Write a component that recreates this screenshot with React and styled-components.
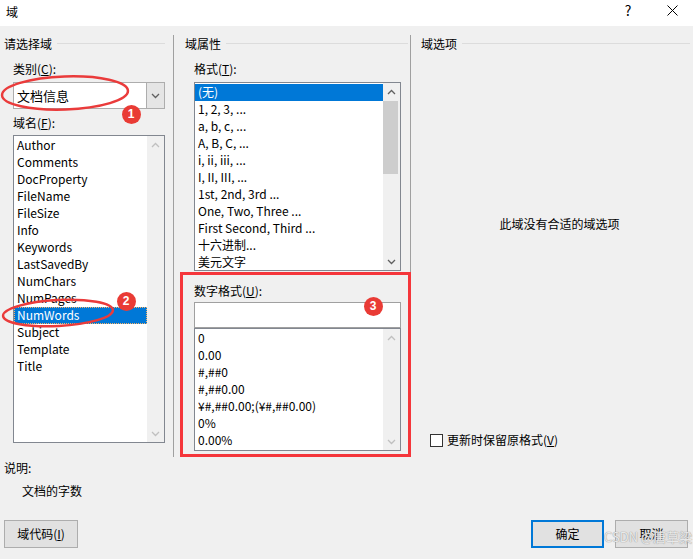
import React from 'react';
import styled, { createGlobalStyle } from 'styled-components';

const Global = createGlobalStyle`
  html, body { margin: 0; padding: 0; background: #f0f0f0; }
  body {
    font-family: "Noto Sans CJK SC", "Noto Sans", sans-serif;
    font-size: 12px;
    color: #000;
  }
  * { box-sizing: border-box; }
`;

const Window = styled.div`
  position: relative;
  width: 693px;
  height: 559px;
  background: #f0f0f0;
  overflow: hidden;
  display: flex;
  flex-direction: column;
`;

const TitleBar = styled.div`
  height: 26px;
  flex-shrink: 0;
  background: #fff;
  display: flex;
  align-items: center;
`;

const Title = styled.span`
  flex: 1;
  padding-left: 6px;
  line-height: 16px;
  margin-top: -3px;
`;

const TitleButton = styled.div`
  width: ${p => p.$w}px;
  height: 26px;
  display: flex;
  align-items: center;
  justify-content: center;
  padding-bottom: 6px;
  font-size: 14px;
`;

const Main = styled.div`
  display: flex;
  height: 431px;
  padding-top: 9px;
  flex-shrink: 0;
`;

const Column = styled.div`
  width: ${p => (p.$w ? `${p.$w}px` : 'auto')};
  flex: ${p => (p.$w ? '0 0 auto' : '1')};
  display: flex;
  flex-direction: column;
`;

const VSep = styled.div`
  width: 1px;
  background: #a0a0a0;
  flex-shrink: 0;
`;

const GroupHeading = styled.div`
  display: flex;
  align-items: center;
  height: 18px;
  padding-left: ${p => p.$pl}px;
  padding-right: ${p => p.$pr}px;
  line-height: 18px;
  white-space: nowrap;
`;

const HeadingLine = styled.div`
  flex: 1;
  height: 1px;
  margin-left: 5px;
  margin-top: -1px;
  background: #dcdcdc;
`;

const Content = styled.div`
  display: flex;
  flex-direction: column;
  padding-left: ${p => p.$pl}px;
  padding-right: ${p => p.$pr}px;
  flex: 1;
`;

const FieldLabel = styled.div`
  line-height: 16px;
  height: 16px;
  margin-top: ${p => p.$mt}px;
  white-space: nowrap;
`;

const Combo = styled.div`
  margin-top: 5px;
  height: 27px;
  display: flex;
  border: 1px solid #adadad;
  background: #fff;
`;

const ComboText = styled.div`
  flex: 1;
  padding-left: 3px;
  line-height: 25px;
  font-size: 13px;
`;

const DropButton = styled.div`
  width: 18px;
  border-left: 1px solid #adadad;
  background: #e5e5e5;
  display: flex;
  align-items: center;
  justify-content: center;
`;

const ListBox = styled.div`
  margin-top: ${p => p.$mt}px;
  height: ${p => p.$h}px;
  border: 1px solid #828790;
  background: #fff;
  display: flex;
  overflow: hidden;
  flex-shrink: 0;
`;

const Items = styled.div`
  flex: 1;
  padding-top: ${p => p.$pt}px;
  overflow: hidden;
`;

const Item = styled.div`
  height: 17px;
  line-height: 16px;
  padding-left: 3px;
  white-space: nowrap;
  background: ${p => (p.$selected ? '#0078d7' : 'transparent')};
  color: ${p => (p.$selected ? '#fff' : '#000')};
  outline: ${p => (p.$focus ? '1px dotted #f7b267' : 'none')};
  outline-offset: -1px;
`;

const Scrollbar = styled.div`
  width: 17px;
  flex-shrink: 0;
  background: #f0f0f0;
  display: flex;
  flex-direction: column;
`;

const ArrowBox = styled.div`
  height: 17px;
  display: flex;
  align-items: center;
  justify-content: center;
  flex-shrink: 0;
`;

const Track = styled.div`
  flex: 1;
  position: relative;
`;

const Thumb = styled.div`
  position: absolute;
  left: 0;
  right: 2px;
  top: ${p => p.$top}px;
  height: ${p => p.$h}px;
  background: #cdcdcd;
`;

const TextInput = styled.div`
  margin-top: 3px;
  height: 26px;
  border: 1px solid #a0a0a0;
  background: #fff;
  flex-shrink: 0;
`;

const Message = styled.div`
  margin-top: 163px;
  line-height: 16px;
  text-align: center;
`;

const Spacer = styled.div`
  flex: 1;
`;

const CheckRow = styled.label`
  display: flex;
  align-items: center;
  gap: 4px;
  height: 16px;
  margin-bottom: 9px;
  line-height: 16px;
`;

const CheckBox = styled.span`
  width: 13px;
  height: 13px;
  border: 1px solid #333;
  background: #fff;
  display: inline-block;
`;

const Footer = styled.div`
  display: flex;
  flex-direction: column;
  padding: 0 5px 0 4px;
`;

const DescLabel = styled.div`
  margin-top: 3px;
  line-height: 16px;
`;

const DescText = styled.div`
  margin-top: 7px;
  padding-left: 18px;
  line-height: 16px;
`;

const ButtonRow = styled.div`
  margin-top: 21px;
  display: flex;
  justify-content: space-between;
`;

const ButtonGroup = styled.div`
  display: flex;
  gap: 11px;
`;

const Button = styled.div`
  width: ${p => p.$w}px;
  height: 28px;
  background: #e1e1e1;
  border: ${p => (p.$primary ? '2px solid #0078d7' : '1px solid #adadad')};
  display: flex;
  align-items: center;
  justify-content: center;
  line-height: 16px;
`;

const Overlay = styled.svg`
  position: absolute;
  left: 0;
  top: 0;
  width: 693px;
  height: 559px;
  pointer-events: none;
`;

const RedFrame = styled.div`
  position: absolute;
  left: 180px;
  top: 272px;
  width: 231px;
  height: 185px;
  border: 3px solid #f5363b;
  pointer-events: none;
`;

const Badge = styled.div`
  position: absolute;
  left: ${p => p.$x - 9.5}px;
  top: ${p => p.$y - 9.5}px;
  width: 19px;
  height: 19px;
  border-radius: 50%;
  background: #e93b35;
  color: #fff;
  font-family: "Liberation Sans", Arial, sans-serif;
  font-weight: bold;
  font-size: 12px;
  display: flex;
  align-items: center;
  justify-content: center;
`;

const Watermark = styled.div`
  position: absolute;
  left: 604px;
  top: 528px;
  font-size: 13px;
  line-height: 18px;
  color: rgba(255, 255, 255, 0.8);
  text-shadow: 0 0 1px #9a9a9a, 0 0 1px #9a9a9a;
  pointer-events: none;
  white-space: nowrap;
`;

const Chevron = ({ up, enabled }) => (
  <svg width="9" height="6" viewBox="0 0 9 6">
    <polyline
      points={up ? '1,5 4.5,1.5 8,5' : '1,1 4.5,4.5 8,1'}
      fill="none"
      stroke={enabled ? '#606060' : '#c0c0c0'}
      strokeWidth="1.3"
    />
  </svg>
);

const VScroll = ({ enabled, thumb }) => (
  <Scrollbar>
    <ArrowBox><Chevron up enabled={enabled} /></ArrowBox>
    <Track>{thumb && <Thumb $top={thumb.top} $h={thumb.h} />}</Track>
    <ArrowBox><Chevron enabled={enabled} /></ArrowBox>
  </Scrollbar>
);

const fieldNames = [
  'Author', 'Comments', 'DocProperty', 'FileName', 'FileSize', 'Info',
  'Keywords', 'LastSavedBy', 'NumChars', 'NumPages', 'NumWords',
  'Subject', 'Template', 'Title',
];

const formats = [
  '(无)', '1, 2, 3, ...', 'a, b, c, ...', 'A, B, C, ...', 'i, ii, iii, ...',
  'I, II, III, ...', '1st, 2nd, 3rd ...', 'One, Two, Three ...',
  'First Second, Third ...', '十六进制...', '美元文字',
];

const numberFormats = [
  '0', '0.00', '#,##0', '#,##0.00', '¥#,##0.00;(¥#,##0.00)', '0%', '0.00%',
];

export default function App() {
  return (
    <>
      <Global />
      <Window>
        <TitleBar>
          <Title>域</Title>
          <TitleButton $w={46}>?</TitleButton>
          <TitleButton $w={42}>
            <svg width="11" height="11" viewBox="0 0 11 11">
              <path d="M0.5 0.5 L10.5 10.5 M10.5 0.5 L0.5 10.5" stroke="#000" strokeWidth="1" />
            </svg>
          </TitleButton>
        </TitleBar>

        <Main>
          <Column $w={173}>
            <GroupHeading $pl={4} $pr={8}>
              请选择域<HeadingLine />
            </GroupHeading>
            <Content $pl={13} $pr={8}>
              <FieldLabel $mt={8}>类别(<u>C</u>):</FieldLabel>
              <Combo>
                <ComboText>文档信息</ComboText>
                <DropButton><Chevron enabled /></DropButton>
              </Combo>
              <FieldLabel $mt={6}>域名(<u>F</u>):</FieldLabel>
              <ListBox $mt={4} $h={308}>
                <Items $pt={1}>
                  {fieldNames.map(n => (
                    <Item key={n} $selected={n === 'NumWords'} $focus={n === 'NumWords'}>{n}</Item>
                  ))}
                </Items>
                <VScroll />
              </ListBox>
            </Content>
          </Column>

          <VSep />

          <Column $w={236}>
            <GroupHeading $pl={11} $pr={2}>
              域属性<HeadingLine />
            </GroupHeading>
            <Content $pl={20} $pr={9}>
              <FieldLabel $mt={8}>格式(<u>T</u>):</FieldLabel>
              <ListBox $mt={5} $h={189}>
                <Items $pt={1}>
                  {formats.map((f, i) => (
                    <Item key={f} $selected={i === 0}>{f}</Item>
                  ))}
                </Items>
                <VScroll enabled thumb={{ top: 1, h: 73 }} />
              </ListBox>
              <FieldLabel $mt={12}>数字格式(<u>U</u>):</FieldLabel>
              <TextInput />
              <ListBox $mt={0} $h={123}>
                <Items $pt={1}>
                  {numberFormats.map(f => (
                    <Item key={f}>{f}</Item>
                  ))}
                </Items>
                <VScroll />
              </ListBox>
            </Content>
          </Column>

          <VSep />

          <Column>
            <GroupHeading $pl={10} $pr={3}>
              域选项<HeadingLine />
            </GroupHeading>
            <Content $pl={19} $pr={4}>
              <Message>此域没有合适的域选项</Message>
              <Spacer />
              <CheckRow>
                <CheckBox />
                <span>更新时保留原格式(<u>V</u>)</span>
              </CheckRow>
            </Content>
          </Column>
        </Main>

        <Footer>
          <DescLabel>说明:</DescLabel>
          <DescText>文档的字数</DescText>
          <ButtonRow>
            <Button $w={74}>域代码(<u>I</u>)</Button>
            <ButtonGroup>
              <Button $w={73} $primary>确定</Button>
              <Button $w={73}>取消</Button>
            </ButtonGroup>
          </ButtonRow>
        </Footer>

        <Overlay viewBox="0 0 693 559">
          <ellipse cx="65" cy="93" rx="63" ry="16.5" fill="none" stroke="#ea3b3b" strokeWidth="2.5" transform="rotate(-2 65 93)" />
          <ellipse cx="58" cy="313" rx="55" ry="13" fill="none" stroke="#ea3b3b" strokeWidth="2.5" transform="rotate(-3 58 313)" />
        </Overlay>
        <RedFrame />
        <Badge $x={131} $y={114}>1</Badge>
        <Badge $x={126} $y={301}>2</Badge>
        <Badge $x={373} $y={306}>3</Badge>
        <Watermark>CSDN @唐草梁</Watermark>
      </Window>
    </>
  );
}
